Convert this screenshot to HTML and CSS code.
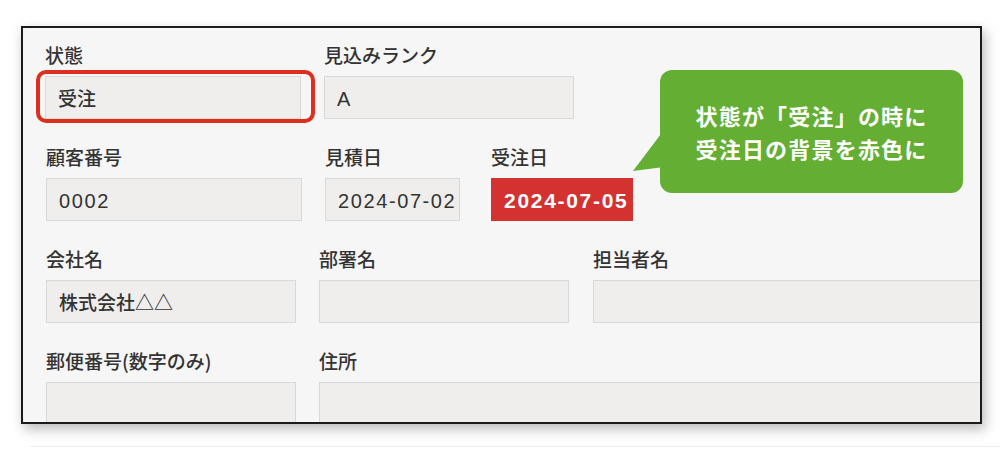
FILE: index.html
```html
<!DOCTYPE html>
<html lang="ja">
<head>
<meta charset="utf-8">
<link rel="stylesheet" href="styles.css">
</head>
<body>
<div class="card">
  <div class="row r1">
    <div class="field w255 ringed">
      <div class="label">状態</div>
      <div class="box">受注</div>
      <div class="ring"></div>
    </div>
    <div class="field w250">
      <div class="label">見込みランク</div>
      <div class="box"><span class="num">A</span></div>
    </div>
  </div>
  <div class="row r2">
    <div class="field w256">
      <div class="label">顧客番号</div>
      <div class="box"><span class="num">0002</span></div>
    </div>
    <div class="field w135">
      <div class="label">見積日</div>
      <div class="box"><span class="num">2024-07-02</span></div>
    </div>
    <div class="field w142">
      <div class="label">受注日</div>
      <div class="box red"><span class="num bold">2024-07-05</span></div>
    </div>
  </div>
  <div class="row r3">
    <div class="field w250">
      <div class="label">会社名</div>
      <div class="box">株式会社△△</div>
    </div>
    <div class="field w250">
      <div class="label">部署名</div>
      <div class="box"></div>
    </div>
    <div class="field w420">
      <div class="label">担当者名</div>
      <div class="box"></div>
    </div>
  </div>
  <div class="row r4">
    <div class="field w250">
      <div class="label">郵便番号(数字のみ)</div>
      <div class="box"></div>
    </div>
    <div class="field w720">
      <div class="label">住所</div>
      <div class="box"></div>
    </div>
  </div>
  <div class="callout">
    <div class="line">状態が「受注」の時に</div>
    <div class="line">受注日の背景を赤色に</div>
  </div>
</div>
<div class="rule"></div>
</body>
</html>
```

FILE: styles.css
```css
html, body {
  margin: 0;
  padding: 0;
  background: #ffffff;
}
body {
  font-family: "Noto Sans CJK JP", "Noto Sans", sans-serif;
  color: #333333;
  width: 1000px;
  height: 449px;
  overflow: hidden;
}
.card {
  position: relative;
  margin: 26px 0 0 21px;
  width: 934px;
  height: 382px;
  border: 2px solid #1b1b1b;
  background: #f6f6f6;
  box-shadow: 3px 5px 12px rgba(0, 0, 0, 0.28);
  overflow: hidden;
  padding: 12px 0 0 23px;
  box-sizing: content-box;
}
.row {
  display: flex;
  margin-bottom: 23px;
}
.r1 { margin-left: -1px; gap: 23px; }
.r2 { gap: 23px; }
.r2 .w142 { margin-left: 8px; }
.r3 { gap: 23px; }
.r3 .w420 { margin-left: 1px; }
.r4 { gap: 23px; }
.field {
  position: relative;
  display: flex;
  flex-direction: column;
  flex-shrink: 0;
}
.w255 { width: 256px; }
.w250 { width: 250px; }
.w256 { width: 256px; }
.w135 { width: 135px; }
.w142 { width: 142px; }
.w420 { width: 420px; }
.w720 { width: 720px; }
.label {
  height: 30px;
  line-height: 30px;
  font-size: 19px;
  font-weight: 500;
  margin-bottom: 6px;
  white-space: nowrap;
  color: #333333;
}
.box {
  height: 43px;
  box-sizing: border-box;
  border: 1px solid #d9d9d9;
  background: #efeeed;
  padding: 0 0 0 12px;
  font-size: 19px;
  font-weight: 500;
  line-height: 41px;
  white-space: nowrap;
  overflow: hidden;
  color: #333333;
}
.num {
  font-family: "Liberation Sans", "Noto Sans CJK JP", sans-serif;
  font-size: 20px;
  font-weight: normal;
  letter-spacing: 1.6px;
}
.box.red {
  background: #d33231;
  border-color: #d33231;
  color: #ffffff;
  padding-left: 12px;
}
.num.bold {
  font-weight: bold;
  font-size: 21px;
  letter-spacing: 1.7px;
}
.ring {
  position: absolute;
  left: -9px;
  top: 30px;
  width: 279px;
  height: 53px;
  box-sizing: border-box;
  border: 4px solid #dc2f1d;
  border-radius: 10px;
}
.callout {
  position: absolute;
  left: 637px;
  top: 42px;
  width: 303px;
  height: 123px;
  background: #63ae33;
  border-radius: 12px;
  color: #ffffff;
  font-weight: bold;
  font-size: 22px;
  letter-spacing: 1.2px;
  display: flex;
  flex-direction: column;
  justify-content: center;
  align-items: center;
  line-height: 33px;
  padding-top: 1px;
  box-sizing: border-box;
}
.callout::before {
  content: "";
  position: absolute;
  left: -28px;
  top: 58px;
  width: 32px;
  height: 45px;
  background: #63ae33;
  clip-path: polygon(32px 2px, 32px 39px, 1px 43px);
}
.rule {
  margin: 22px 0 0 30px;
  height: 1px;
  background: #ececec;
}
```
